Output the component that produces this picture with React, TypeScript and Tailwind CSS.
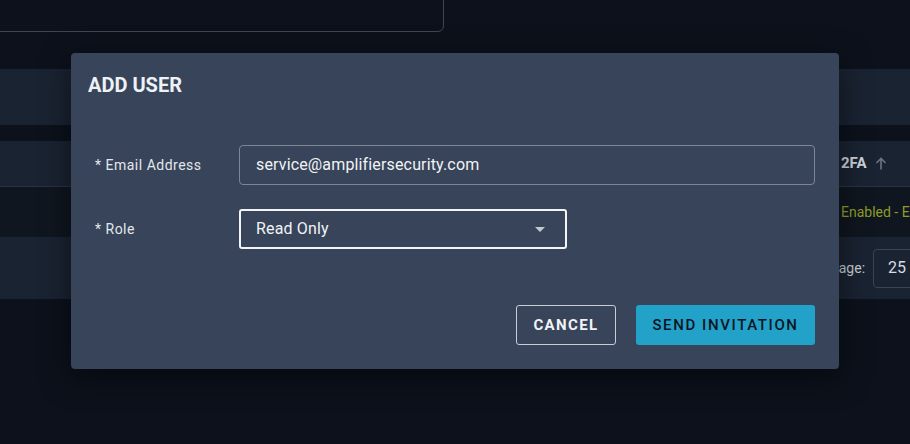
import React from "react";

export default function App() {
  return (
    <div
      className="relative w-[910px] h-[444px] overflow-hidden bg-[#0c111b]"
      style={{ fontFamily: "Roboto, 'Liberation Sans', sans-serif" }}
    >
      {/* background page */}
      <div className="flex flex-col">
        <div className="ml-[-6px] mt-[-12px] h-[44px] w-[450px] rounded-md border border-[#3f4552]" />
        <div className="mt-[37px] h-[56px] bg-[#1a2332]" />
        <div className="mt-[16px] h-[46px] bg-[#1a2332] border-b border-[#2a3342] flex items-center pl-[841px]">
          <span className="text-[15px] font-bold text-[#cdd2da]">2FA</span>
          <svg className="ml-[8px]" width="12" height="13" viewBox="0 0 12 13">
            <path d="M6 12.5 V1.5 M1.5 6 L6 1.5 L10.5 6" stroke="#6b7383" strokeWidth="1.6" fill="none" />
          </svg>
        </div>
        <div className="h-[50px] bg-[#10161f] flex items-center pl-[841px]">
          <span className="text-[14px] text-[#8e9c2c] whitespace-nowrap">Enabled - Enabled</span>
        </div>
        <div className="h-[62px] bg-[#1a2332] flex items-center pl-[830px]">
          <span className="text-[14px] text-[#c7ccd4] whitespace-nowrap">Page:</span>
          <div className="ml-[8px] h-[39px] w-[60px] shrink-0 rounded border border-[#3b4453] flex items-center pl-[14px] text-[16px] text-[#d7dbe1]">
            25
          </div>
        </div>
      </div>

      {/* modal */}
      <div className="absolute left-[71px] top-[53px] w-[768px] h-[316px] rounded bg-[#374459] shadow-[0_8px_30px_rgba(0,0,0,0.5)] flex flex-col">
        <div className="pl-[17px] pt-[20px] text-[20px] font-bold text-[#eef1f5] leading-[24px]">
          ADD USER
        </div>
        <div className="mt-[48px] px-[24px] flex flex-col gap-[24px]">
          <div className="flex items-center">
            <div className="w-[144px] text-[14px] text-[#e3e7ed] tracking-[0.5px]">* Email Address</div>
            <div className="flex-1 h-[40px] rounded border border-[#7c8697] flex items-center pl-[16px] text-[16px] tracking-[0.15px] text-[#f1f3f6]">
              service@amplifiersecurity.com
            </div>
          </div>
          <div className="flex items-center">
            <div className="w-[144px] text-[14px] text-[#e3e7ed] tracking-[0.5px]">* Role</div>
            <div className="w-[328px] h-[40px] rounded-[3px] border-2 border-[#f2f4f7] flex items-center pl-[15px] pr-[20px] text-[16px] tracking-[0.15px] text-[#f1f3f6]">
              <span className="flex-1">Read Only</span>
              <svg width="10" height="5" viewBox="0 0 10 5">
                <path d="M0 0 L10 0 L5 5 Z" fill="#c3c9d2" />
              </svg>
            </div>
          </div>
        </div>
        <div className="mt-[56px] px-[24px] flex justify-end gap-[20px]">
          <button className="h-[40px] w-[100px] rounded-[3px] border border-[#c9ced6] text-[15px] font-bold tracking-[1.4px] text-[#f1f3f6]">
            CANCEL
          </button>
          <button className="h-[40px] w-[179px] rounded-[3px] bg-[#22a1c9] text-[15px] font-medium tracking-[1.6px] text-[#0d1522]">
            SEND INVITATION
          </button>
        </div>
      </div>
    </div>
  );
}
